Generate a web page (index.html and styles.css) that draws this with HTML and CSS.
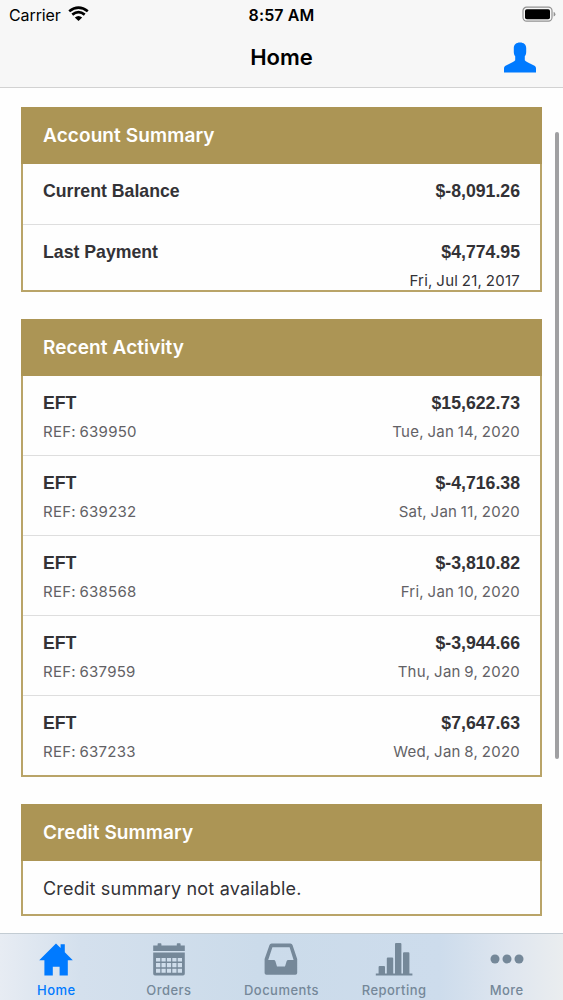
FILE: index.html
```html
<!DOCTYPE html>
<html lang="en">
<head>
    <meta charset="UTF-8">
    <meta name="viewport" content="width=device-width, initial-scale=1.0">
    <title>Home</title>
    <link rel="stylesheet" href="styles.css">
</head>
<body>
    <header class="top">
        <div class="status-bar">
            <div class="carrier">
                <span>Carrier</span>
                <svg width="21" height="16" viewBox="0 0 21 16">
                    <g fill="none" stroke="#000" stroke-width="2.7">
                        <path d="M1.2 5.2 Q10.5 -2.1 19.8 5.2"/>
                        <path d="M4.3 8.6 Q10.5 3.7 16.7 8.6"/>
                    </g>
                    <path d="M6.8 11.4 Q10.5 8.4 14.2 11.4 L10.5 15 Z"/>
                </svg>
            </div>
            <span class="time">8:57 AM</span>
            <svg class="battery" width="34" height="17" viewBox="0 0 34 17">
                <rect x="1" y="1.2" width="29" height="14" rx="3.6" fill="none" stroke="#929292" stroke-width="1.2"/>
                <rect x="3" y="3.2" width="25" height="10" rx="1.8"/>
                <path d="M31.6 5.8 Q33.4 6.4 33.4 8.2 Q33.4 10 31.6 10.6 Z" fill="#929292"/>
            </svg>
        </div>
        <div class="nav-bar">
            <h1>Home</h1>
            <svg class="profile" width="32" height="31" viewBox="0 0 32 31">
                <path fill="#007aff" d="M16 0.5 C19.8 0.5 22.2 2.7 22.2 6 L22.2 10 C22.2 12 21.6 13.2 20.8 14.2 L20.8 18.2 C22 19.6 24 20.4 26 21.4 L30 23.4 C31.4 24.2 32 25 32 26.4 L32 30.4 L0 30.4 L0 26.4 C0 25 0.6 24.2 2 23.4 L6 21.4 C8 20.4 10 19.6 11.2 18.2 L11.2 14.2 C10.4 13.2 9.8 12 9.8 10 L9.8 6 C9.8 2.7 12.2 0.5 16 0.5 Z"/>
            </svg>
        </div>
    </header>

    <main>
        <section class="card account">
            <h2>Account Summary</h2>
            <div class="row">
                <div class="line"><strong>Current Balance</strong><strong>$-8,091.26</strong></div>
            </div>
            <div class="row">
                <div class="line"><strong>Last Payment</strong><strong>$4,774.95</strong></div>
                <div class="line small"><span></span><span>Fri, Jul 21, 2017</span></div>
            </div>
        </section>

        <section class="card activity">
            <h2>Recent Activity</h2>
            <div class="row">
                <div class="line"><strong>EFT</strong><strong>$15,622.73</strong></div>
                <div class="line small"><span>REF: 639950</span><span>Tue, Jan 14, 2020</span></div>
            </div>
            <div class="row">
                <div class="line"><strong>EFT</strong><strong>$-4,716.38</strong></div>
                <div class="line small"><span>REF: 639232</span><span>Sat, Jan 11, 2020</span></div>
            </div>
            <div class="row">
                <div class="line"><strong>EFT</strong><strong>$-3,810.82</strong></div>
                <div class="line small"><span>REF: 638568</span><span>Fri, Jan 10, 2020</span></div>
            </div>
            <div class="row">
                <div class="line"><strong>EFT</strong><strong>$-3,944.66</strong></div>
                <div class="line small"><span>REF: 637959</span><span>Thu, Jan 9, 2020</span></div>
            </div>
            <div class="row">
                <div class="line"><strong>EFT</strong><strong>$7,647.63</strong></div>
                <div class="line small"><span>REF: 637233</span><span>Wed, Jan 8, 2020</span></div>
            </div>
        </section>

        <section class="card credit">
            <h2>Credit Summary</h2>
            <p>Credit summary not available.</p>
        </section>
        <div class="scrollbar"></div>
    </main>

    <nav class="tab-bar">
        <div class="tab active">
            <svg width="36" height="36" viewBox="0 0 36 36" fill="currentColor">
                <path d="M18 1.5 L22.6 6 V2.2 H26.8 V10.2 L34.8 18.2 H29.8 V33.4 H21.6 V24.8 H14.8 V33.4 H6.4 V18.2 H1.2 Z"/>
            </svg>
            <span>Home</span>
        </div>
        <div class="tab">
            <svg width="36" height="36" viewBox="0 0 36 36" fill="currentColor">
                <path d="M2.2 3.6 H6.6 V2 Q6.6 1.3 7.3 1.3 H9.7 Q10.4 1.3 10.4 2 V3.6 H25.8 V2 Q25.8 1.3 26.5 1.3 H28.9 Q29.6 1.3 29.6 2 V3.6 H33.8 V9 H2.2 Z"/>
                <path fill-rule="evenodd" d="M2.2 10.6 H33.8 V31.8 Q33.8 33.6 32 33.6 H4 Q2.2 33.6 2.2 31.8 Z M5 16 V19.6 H9.3 V16 Z M10.5 16 V19.6 H14.7 V16 Z M15.9 16 V19.6 H20.1 V16 Z M21.3 16 V19.6 H25.5 V16 Z M26.7 16 V19.6 H31 V16 Z M5 21.1 V25.2 H9.3 V21.1 Z M10.5 21.1 V25.2 H14.7 V21.1 Z M15.9 21.1 V25.2 H20.1 V21.1 Z M21.3 21.1 V25.2 H25.5 V21.1 Z M26.7 21.1 V25.2 H31 V21.1 Z M5 26.7 V30.8 H9.3 V26.7 Z M10.5 26.7 V30.8 H14.7 V26.7 Z M15.9 26.7 V30.8 H20.1 V26.7 Z M21.3 26.7 V30.8 H25.5 V26.7 Z M26.7 26.7 V30.8 H31 V26.7 Z"/>
            </svg>
            <span>Orders</span>
        </div>
        <div class="tab">
            <svg width="36" height="36" viewBox="0 0 36 36" fill="currentColor">
                <path fill-rule="evenodd" d="M8.6 1.4 H27.4 Q29 1.4 29.5 3 L34.2 17 V31 Q34.2 32.8 32.4 32.8 H3.4 Q1.6 32.8 1.6 31 V17 L6.5 3 Q7 1.4 8.6 1.4 Z M9.4 5.2 L5.2 18 H10.8 Q12 18 12.4 19.2 L14 24.4 H22 L23.6 19.2 Q24 18 25.2 18 H30.6 L26.6 5.2 Z"/>
            </svg>
            <span>Documents</span>
        </div>
        <div class="tab">
            <svg width="38" height="36" viewBox="0 0 38 36" fill="currentColor">
                <path d="M0.8 31.4 H3.6 V25 Q3.6 24 4.6 24 H9 Q10 24 10 25 V31.4 H11.8 V16.6 Q11.8 15.6 12.8 15.6 H17.2 Q18.2 15.6 18.2 16.6 V31.4 H20 V2 Q20 1 21 1 H25.4 Q26.4 1 26.4 2 V31.4 H28 V11.2 Q28 10.2 29 10.2 H33.4 Q34.4 10.2 34.4 11.2 V31.4 H37.4 V33.6 H0.8 Z"/>
            </svg>
            <span>Reporting</span>
        </div>
        <div class="tab">
            <svg width="36" height="36" viewBox="0 0 36 36" fill="currentColor">
                <circle cx="6" cy="17" r="4.5"/>
                <circle cx="18" cy="17" r="4.5"/>
                <circle cx="30" cy="17" r="4.5"/>
            </svg>
            <span>More</span>
        </div>
    </nav>
</body>
</html>
```
FILE: styles.css
```css
* {
    box-sizing: border-box;
}
body {
    margin: 0;
    height: 1000px;
    display: flex;
    flex-direction: column;
    overflow: hidden;
    font-family: Inter, "Liberation Sans", sans-serif;
    background-color: #fefefe;
    color: #333236;
}
h1, h2, p {
    margin: 0;
}
svg {
    display: block;
}
.top {
    height: 88px;
    background-color: #f7f7f7;
    border-bottom: 1px solid #d2d2d2;
    color: #000000;
}
.status-bar, .nav-bar {
    display: grid;
    grid-template-columns: 1fr auto 1fr;
    align-items: center;
}
.status-bar {
    height: 28px;
    padding: 0 9px 0 9px;
    font-size: 16px;
}
.carrier {
    display: flex;
    gap: 7px;
    align-items: center;
    letter-spacing: -0.1px;
}
.carrier span, .time {
    padding-top: 1px;
}
.time {
    font-weight: 600;
    letter-spacing: 0.1px;
}
.battery {
    justify-self: end;
    margin-right: -2px;
}
.nav-bar {
    height: 58px;
    padding: 0 27px;
}
h1 {
    grid-column: 2;
    font-size: 22px;
    font-weight: 600;
}
.profile {
    justify-self: end;
}
main {
    position: relative;
    flex: 1;
    padding: 19px 21px 0;
}
.card {
    border: 2px solid #b9a468;
    margin-bottom: 27px;
}
.account {
    height: 185px;
}
.activity {
    height: 458px;
}
.credit {
    height: 112px;
    margin-bottom: 0;
}
h2 {
    height: 57px;
    margin: -2px -2px 0;
    padding: 0 22px;
    line-height: 58px;
    background-color: #ac9555;
    color: #ffffff;
    font-size: 19px;
    font-weight: 600;
    letter-spacing: 0.1px;
}
.row {
    height: 80px;
    padding: 13px 20px 0;
    border-bottom: 1px solid #dedede;
}
.row:last-child {
    border-bottom: none;
}
.account .row {
    height: 61px;
}
.line {
    display: flex;
    justify-content: space-between;
    line-height: 28px;
}
.line strong {
    font-family: "Liberation Sans", Arial, sans-serif;
    font-size: 17.7px;
}
.small {
    margin-top: 1px;
    font-size: 15px;
    letter-spacing: 0.25px;
    word-spacing: -0.8px;
    color: #626165;
}
.account .small {
    color: #333236;
}
.card p {
    padding: 0 20px;
    line-height: 56px;
    font-size: 18px;
    letter-spacing: 0.2px;
}
.scrollbar {
    position: absolute;
    top: 44px;
    right: 4px;
    width: 4px;
    height: 627px;
    border-radius: 2px;
    background-color: #a0a0a2;
}
.tab-bar {
    height: 67px;
    display: grid;
    grid-template-columns: repeat(5, 1fr);
    border-top: 1px solid #c3ccd3;
    background: linear-gradient(to right, #e7ecf3 0, #d4e0ed 80px, #cbdbea 260px, #cddcec 440px, #dfe6ef 510px, #eaedef 563px);
}
.tab {
    display: flex;
    flex-direction: column;
    align-items: center;
    padding-top: 8px;
    color: #758899;
    font-size: 13px;
    font-weight: 500;
    letter-spacing: 0.45px;
}
.tab span {
    line-height: 24px;
}
.active {
    color: #007aff;
}
```
